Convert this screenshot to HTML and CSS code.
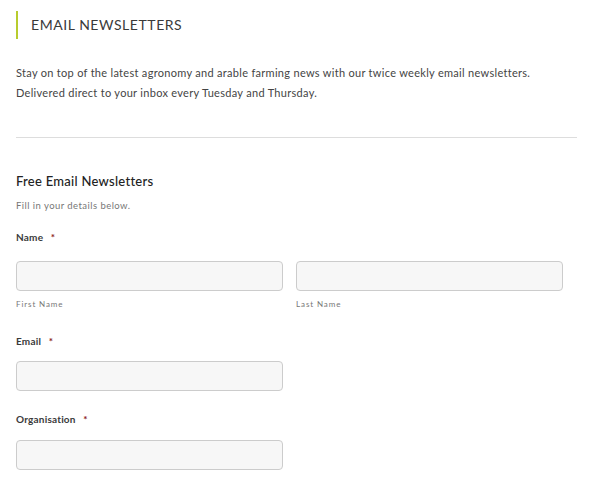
FILE: index.html
```html
<!DOCTYPE html>
<html>
<head>
<meta charset="utf-8">
<link rel="stylesheet" href="styles.css">
</head>
<body>
<div class="page">
  <h2 class="title">EMAIL NEWSLETTERS</h2>
  <div class="intro">
    <p>Stay on top of the latest agronomy and arable farming news with our twice weekly email newsletters.</p>
    <p>Delivered direct to your inbox every Tuesday and Thursday.</p>
  </div>
  <hr class="rule">
  <h3 class="form-title">Free Email Newsletters</h3>
  <p class="form-desc">Fill in your details below.</p>

  <div class="field">
    <div class="label">Name <span class="req">*</span></div>
    <div class="name-row">
      <div class="sub">
        <div class="input"></div>
        <div class="sublabel">First Name</div>
      </div>
      <div class="sub">
        <div class="input"></div>
        <div class="sublabel">Last Name</div>
      </div>
    </div>
  </div>

  <div class="field field-email">
    <div class="label">Email <span class="req">*</span></div>
    <div class="input half"></div>
  </div>

  <div class="field field-org">
    <div class="label">Organisation <span class="req">*</span></div>
    <div class="input half"></div>
  </div>
</div>
</body>
</html>
```

FILE: styles.css
```css
html, body {
  margin: 0;
  padding: 0;
  background: #fff;
}
body {
  font-family: Lato, "Open Sans", sans-serif;
  color: #444;
}
.page {
  padding: 11px 12px 0 16px;
}
.title {
  margin: 0;
  border-left: 2px solid #b8cc2e;
  height: 28px;
  line-height: 28px;
  padding-left: 13px;
  font-size: 14px;
  font-weight: 400;
  color: #3a3a3a;
  letter-spacing: 0.55px;
}
.intro {
  margin-top: 24px;
}
.intro p {
  margin: 0;
  font-size: 11px;
  line-height: 20px;
  letter-spacing: 0.3px;
  color: #444;
}
.rule {
  margin: 34px 0 0 0;
  border: 0;
  border-top: 1px solid #ddd;
  height: 0;
}
.form-title {
  margin: 34px 0 0 0;
  font-size: 13px;
  line-height: 18px;
  font-weight: 500;
  letter-spacing: 0.27px;
  color: #222;
}
.form-desc {
  margin: 9px 0 0 0;
  font-size: 9.5px;
  line-height: 14px;
  letter-spacing: 0.45px;
  color: #777;
}
.field {
  margin-top: 17px;
}
.label {
  font-size: 10px;
  line-height: 14px;
  font-weight: 700;
  letter-spacing: 0.2px;
  color: #3a3a3a;
}
.req {
  color: #8b1a1a;
  margin-left: 5px;
}
.name-row {
  display: flex;
  gap: 13px;
  margin-top: 17px;
}
.sub {
  width: 267px;
}
.input {
  box-sizing: border-box;
  width: 267px;
  height: 30px;
  border: 1px solid #ccc;
  border-radius: 4px;
  background: #f7f7f7;
}
.sublabel {
  margin-top: 7px;
  font-size: 8px;
  line-height: 12px;
  letter-spacing: 0.9px;
  color: #777;
}
.field-email {
  margin-top: 24px;
}
.field-email .input {
  margin-top: 13px;
}
.field-org .input {
  margin-top: 14px;
}
.field-org {
  margin-top: 21px;
}
```
